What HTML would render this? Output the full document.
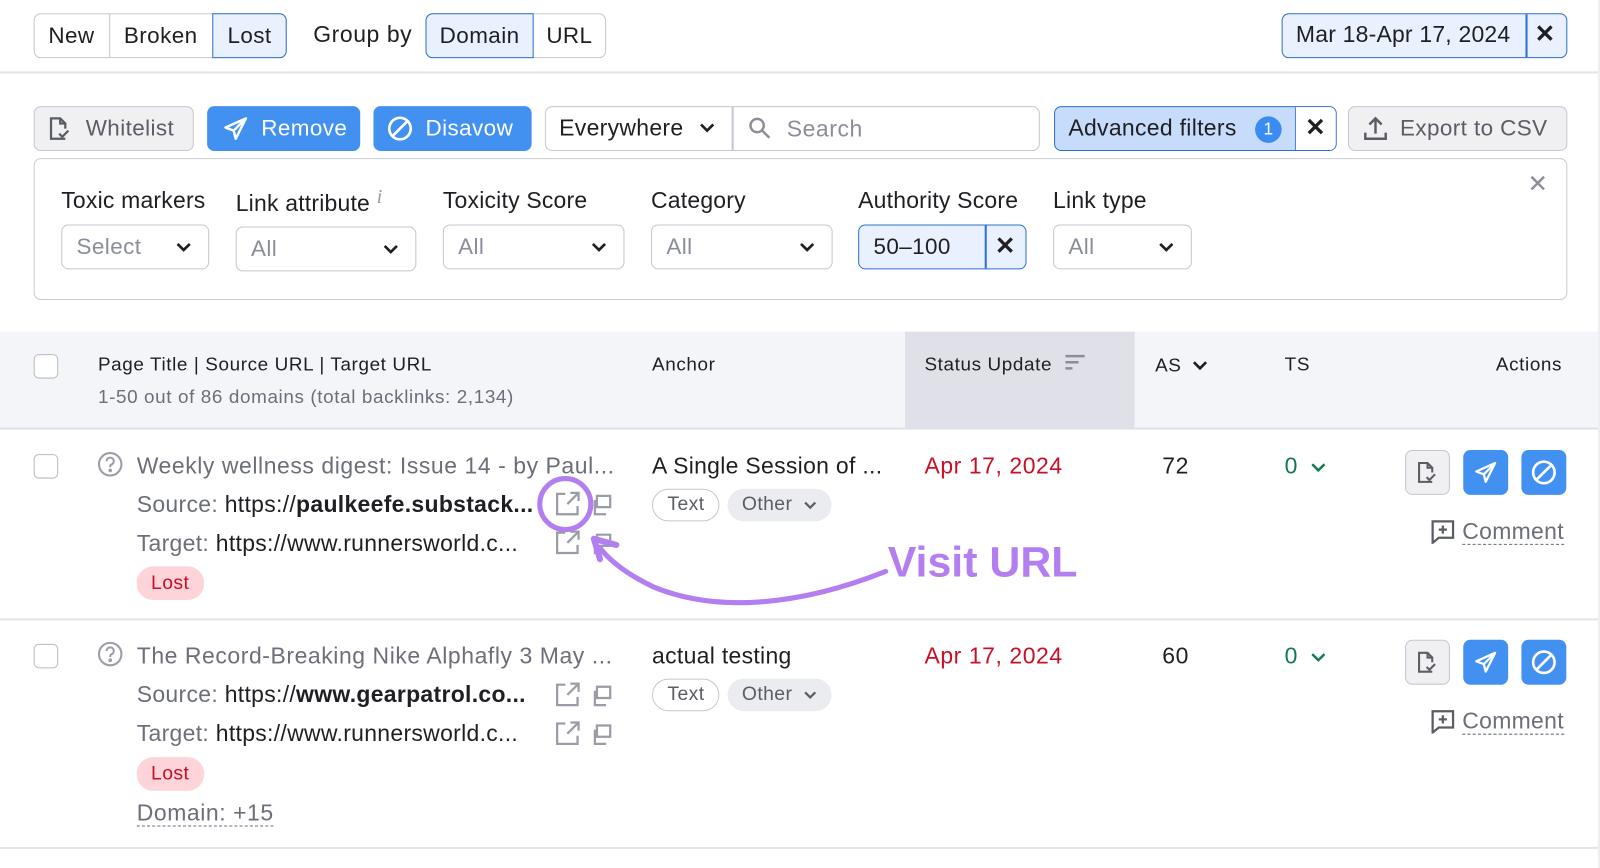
<!DOCTYPE html>
<html><head><meta charset="utf-8">
<style>
*{box-sizing:border-box;margin:0;padding:0}
body{width:1600px;height:851px;background:#fff;font-family:"Liberation Sans",Arial,sans-serif;color:#1f1f23;position:relative;overflow:hidden}
#w{position:absolute;left:0;top:0;width:1568px;height:834px;transform:scale(1.0204);transform-origin:0 0}
.a{position:absolute}
.b{position:absolute;border:1.5px solid #c4c7d0;border-radius:7px;display:flex;align-items:center;font-size:22px;white-space:nowrap;letter-spacing:.4px}
.seg{position:absolute;display:flex;align-items:center;justify-content:center;font-size:22px;height:44px;letter-spacing:.4px}
.t{position:absolute;font-size:22.5px;white-space:nowrap;letter-spacing:.55px}
.h{position:absolute;font-size:18.5px;white-space:nowrap;letter-spacing:.6px}
.gray{color:#6c6e79}
.dd{position:absolute;border:1.5px solid #c4c7d0;border-radius:7px;height:44px;font-size:22px;color:#8b8d98;display:flex;align-items:center;padding-left:14px;letter-spacing:.4px}
.dd svg{position:absolute;right:16px;top:15px}
.cb{position:absolute;width:24px;height:24px;border:1.5px solid #b7bac4;border-radius:5px;background:#fff}
.pill{position:absolute;height:32px;border-radius:16px;font-size:19px;display:flex;align-items:center;padding:0 14px;letter-spacing:.4px}
.ab{position:absolute;width:44px;height:44px;border-radius:7px;display:flex;align-items:center;justify-content:center}
.dash{border-bottom:1.5px dashed #6c6e79}
</style></head><body><div id="w">

<div class="b" style="left:33px;top:13px;width:248px;height:44px;overflow:hidden"></div>
<div class="seg" style="left:33px;top:13px;width:74px">New</div>
<div class="a" style="left:107px;top:14px;width:1px;height:42px;background:#c4c7d0"></div>
<div class="seg" style="left:107px;top:13px;width:101px">Broken</div>
<div class="seg" style="left:208px;top:13px;width:73px;background:#e9f1fe;border:1.5px solid #2d6fce;border-radius:0 7px 7px 0">Lost</div>
<div class="t" style="left:307px;top:21px">Group by</div>
<div class="b" style="left:417px;top:13px;width:177px;height:44px"></div>
<div class="seg" style="left:417px;top:13px;width:106px;background:#e9f1fe;border:1.5px solid #2d6fce;border-radius:7px 0 0 7px">Domain</div>
<div class="seg" style="left:523px;top:13px;width:70px">URL</div>
<div class="b" style="left:1256px;top:13px;width:280px;height:44px;background:#e9f1fe;border-color:#2d6fce"></div>
<div class="t" style="left:1270px;top:21px;letter-spacing:.2px">Mar 18-Apr 17, 2024</div>
<div class="a" style="left:1495px;top:14px;width:1.5px;height:42px;background:#2d6fce"></div>
<div class="t" style="left:1504px;top:19px;font-size:24px;font-weight:bold">✕</div>
<div class="a" style="left:0;top:70px;width:1568px;height:2px;background:#e4e5ea"></div>

<div class="b" style="left:33px;top:104px;width:157px;height:44px;background:#f0f0f3;color:#5a5c66;padding-left:12px">
<svg width="26" height="26" viewBox="0 0 26 26" fill="none" stroke="#5a5c66" stroke-width="2.2"><path d="M18 23H4V3h9l5 5v5"/><path d="M13 3v5h5"/><path d="M12 18l3 3 6-6"/></svg>
<span style="margin-left:12px">Whitelist</span></div>
<div class="b" style="left:203px;top:104px;width:150px;height:44px;background:#4290f0;border-color:#4290f0;color:#fff;padding-left:14px">
<svg width="26" height="26" viewBox="0 0 26 26" fill="none" stroke="#fff" stroke-width="2.4" stroke-linejoin="round"><path d="M23 3L3 12l8 3 2 8z"/><path d="M11 15l12-12"/></svg>
<span style="margin-left:12px">Remove</span></div>
<div class="b" style="left:366px;top:104px;width:155px;height:44px;background:#4290f0;border-color:#4290f0;color:#fff;padding-left:12px">
<svg width="26" height="26" viewBox="0 0 26 26" fill="none" stroke="#fff" stroke-width="2.6"><circle cx="13" cy="13" r="10.5"/><path d="M6 20L20 6"/></svg>
<span style="margin-left:12px">Disavow</span></div>
<div class="b" style="left:534px;top:104px;width:485px;height:44px"></div>
<div class="t" style="left:548px;top:113px;letter-spacing:.3px">Everywhere</div>
<svg class="a" style="left:685px;top:119px" width="16" height="12" viewBox="0 0 16 12" fill="none" stroke="#1f1f23" stroke-width="2.6"><path d="M2 3l6 6 6-6"/></svg>
<div class="a" style="left:717px;top:105px;width:1.5px;height:42px;background:#c4c7d0"></div>
<svg class="a" style="left:733px;top:114px" width="24" height="24" viewBox="0 0 24 24" fill="none" stroke="#8b8d98" stroke-width="2.4"><circle cx="9" cy="9" r="6.5"/><path d="M14 14l7 7"/></svg>
<div class="t" style="left:771px;top:114px;color:#8b8d98">Search</div>
<div class="b" style="left:1033px;top:104px;width:277px;height:44px;background:#c6dcfa;border-color:#2d6fce"></div>
<div class="a" style="left:1269px;top:105px;width:40px;height:42px;background:#fff;border-left:1.5px solid #2d6fce;border-radius:0 6px 6px 0"></div>
<div class="t" style="left:1047px;top:113px;letter-spacing:.3px">Advanced filters</div>
<div class="a" style="left:1230px;top:114px;width:26px;height:26px;border-radius:13px;background:#3a8cf0;color:#fff;font-size:17px;display:flex;align-items:center;justify-content:center">1</div>
<div class="t" style="left:1279px;top:111px;font-size:24px;font-weight:bold">✕</div>
<div class="b" style="left:1321px;top:104px;width:215px;height:44px;background:#f0f0f3;color:#5a5c66;padding-left:12px">
<svg width="28" height="28" viewBox="0 0 28 28" fill="none" stroke="#5a5c66" stroke-width="2.4"><path d="M14 19V4M8 10l6-6 6 6"/><path d="M4 18v6h20v-6"/></svg>
<span style="margin-left:10px">Export to CSV</span></div>

<div class="a" style="left:33px;top:155px;width:1503px;height:139px;border:1.5px solid #c9cbd3;border-radius:7px"></div>
<div class="t" style="left:1497px;top:166px;font-size:24px;color:#8b8d98">✕</div>
<div class="t" style="left:60px;top:184px;letter-spacing:.2px">Toxic markers</div>
<div class="t" style="left:231px;top:187px;letter-spacing:.2px">Link attribute <i style="color:#9a9ca6;font-family:'Liberation Serif';font-size:20px;position:relative;top:-8px">i</i></div>
<div class="t" style="left:434px;top:184px;letter-spacing:.2px">Toxicity Score</div>
<div class="t" style="left:638px;top:184px;letter-spacing:.2px">Category</div>
<div class="t" style="left:841px;top:184px;letter-spacing:.2px">Authority Score</div>
<div class="t" style="left:1032px;top:184px;letter-spacing:.2px">Link type</div>
<div class="dd" style="left:60px;top:220px;width:145px">Select<svg width="16" height="12" viewBox="0 0 16 12" fill="none" stroke="#1f1f23" stroke-width="2.6"><path d="M2 3l6 6 6-6"/></svg></div>
<div class="dd" style="left:231px;top:222px;width:177px">All<svg width="16" height="12" viewBox="0 0 16 12" fill="none" stroke="#1f1f23" stroke-width="2.6"><path d="M2 3l6 6 6-6"/></svg></div>
<div class="dd" style="left:434px;top:220px;width:178px">All<svg width="16" height="12" viewBox="0 0 16 12" fill="none" stroke="#1f1f23" stroke-width="2.6"><path d="M2 3l6 6 6-6"/></svg></div>
<div class="dd" style="left:638px;top:220px;width:178px">All<svg width="16" height="12" viewBox="0 0 16 12" fill="none" stroke="#1f1f23" stroke-width="2.6"><path d="M2 3l6 6 6-6"/></svg></div>
<div class="dd" style="left:841px;top:220px;width:165px;background:#e9f1fe;border-color:#2d6fce;color:#1f1f23">50–100</div>
<div class="a" style="left:965px;top:221px;width:1.5px;height:42px;background:#2d6fce"></div>
<div class="t" style="left:975px;top:227px;font-size:24px;font-weight:bold">✕</div>
<div class="dd" style="left:1032px;top:220px;width:136px">All<svg width="16" height="12" viewBox="0 0 16 12" fill="none" stroke="#1f1f23" stroke-width="2.6"><path d="M2 3l6 6 6-6"/></svg></div>

<div class="a" style="left:0;top:325px;width:1568px;height:96px;background:#f4f5f9;border-bottom:2px solid #e0e1e6"></div>
<div class="a" style="left:887px;top:325px;width:225px;height:94px;background:#e0e1e8"></div>
<div class="a" style="left:1566px;top:0;width:2px;height:851px;background:#eceef2"></div>
<div class="cb" style="left:33px;top:347px"></div>
<div class="h" style="left:96px;top:346px">Page Title | Source URL | Target URL</div>
<div class="h gray" style="left:96px;top:378px">1-50 out of 86 domains (total backlinks: 2,134)</div>
<div class="h" style="left:639px;top:346px">Anchor</div>
<div class="h" style="left:906px;top:346px">Status Update</div>
<svg class="a" style="left:1044px;top:347px" width="20" height="18" viewBox="0 0 20 18" fill="none" stroke="#8b8d98" stroke-width="2.4"><path d="M0 2h19M0 8h13M0 14h7"/></svg>
<div class="h" style="left:1132px;top:347px">AS</div>
<svg class="a" style="left:1168px;top:352px" width="16" height="12" viewBox="0 0 16 12" fill="none" stroke="#1f1f23" stroke-width="2.6"><path d="M2 3l6 6 6-6"/></svg>
<div class="h" style="left:1259px;top:346px">TS</div>
<div class="h" style="left:1466px;top:346px">Actions</div>

<div class="cb" style="left:33px;top:445px"></div>
<svg class="a" style="left:95px;top:442px" width="26" height="26" viewBox="0 0 26 26" fill="none" stroke="#9a9ca6" stroke-width="2"><circle cx="13" cy="13" r="11"/><path d="M9.5 10a3.5 3.5 0 1 1 4.5 3.3c-.7.3-1 .9-1 1.6v1"/><circle cx="13" cy="19" r=".8" fill="#9a9ca6"/></svg>
<div class="t gray" style="left:134px;top:444px">Weekly wellness digest: Issue 14 - by Paul...</div>
<div class="t" style="left:134px;top:482px;letter-spacing:.3px"><span class="gray">Source:</span> https://<b>paulkeefe.substack...</b></div>
<div class="t" style="left:134px;top:520px;letter-spacing:.3px"><span class="gray">Target:</span> https://www.runnersworld.c...</div>
<div class="pill" style="left:134px;top:555px;background:#fdd4d9;color:#c80f25;height:33px">Lost</div>

<div class="t" style="left:639px;top:444px;letter-spacing:.3px">A Single Session of ...</div>
<div class="pill" style="left:639px;top:479px;border:1.5px solid #c4c7d0;color:#5a5c66">Text</div>
<div class="pill" style="left:713px;top:479px;background:#ebecf0;color:#5a5c66">Other <svg style="margin-left:10px" width="14" height="10" viewBox="0 0 16 12" fill="none" stroke="#5a5c66" stroke-width="2.6"><path d="M2 3l6 6 6-6"/></svg></div>
<div class="t" style="left:906px;top:444px;color:#c80f25">Apr 17, 2024</div>
<div class="t" style="left:1139px;top:444px">72</div>
<div class="t" style="left:1259px;top:444px;color:#137a4e">0</div>
<svg class="a" style="left:1284px;top:452px" width="16" height="12" viewBox="0 0 16 12" fill="none" stroke="#137a4e" stroke-width="2.4"><path d="M2 3l6 6 6-6"/></svg>

<div class="a" style="left:0;top:606px;width:1566px;height:2px;background:#e4e5ea"></div>
<div class="cb" style="left:33px;top:631px"></div>
<svg class="a" style="left:95px;top:628px" width="26" height="26" viewBox="0 0 26 26" fill="none" stroke="#9a9ca6" stroke-width="2"><circle cx="13" cy="13" r="11"/><path d="M9.5 10a3.5 3.5 0 1 1 4.5 3.3c-.7.3-1 .9-1 1.6v1"/><circle cx="13" cy="19" r=".8" fill="#9a9ca6"/></svg>
<div class="t gray" style="left:134px;top:630px">The Record-Breaking Nike Alphafly 3 May ...</div>
<div class="t" style="left:134px;top:668px;letter-spacing:.3px"><span class="gray">Source:</span> https://<b>www.gearpatrol.co...</b></div>
<div class="t" style="left:134px;top:706px;letter-spacing:.3px"><span class="gray">Target:</span> https://www.runnersworld.c...</div>
<div class="pill" style="left:134px;top:742px;background:#fdd4d9;color:#c80f25;height:33px">Lost</div>
<div class="t gray" style="left:134px;top:784px"><span class="dash">Domain: +15</span></div>

<div class="t" style="left:639px;top:630px;letter-spacing:.3px">actual testing</div>
<div class="pill" style="left:639px;top:665px;border:1.5px solid #c4c7d0;color:#5a5c66">Text</div>
<div class="pill" style="left:713px;top:665px;background:#ebecf0;color:#5a5c66">Other <svg style="margin-left:10px" width="14" height="10" viewBox="0 0 16 12" fill="none" stroke="#5a5c66" stroke-width="2.6"><path d="M2 3l6 6 6-6"/></svg></div>
<div class="t" style="left:906px;top:630px;color:#c80f25">Apr 17, 2024</div>
<div class="t" style="left:1139px;top:630px">60</div>
<div class="t" style="left:1259px;top:630px;color:#137a4e">0</div>
<svg class="a" style="left:1284px;top:638px" width="16" height="12" viewBox="0 0 16 12" fill="none" stroke="#137a4e" stroke-width="2.4"><path d="M2 3l6 6 6-6"/></svg>
<div class="a" style="left:0;top:830px;width:1566px;height:2px;background:#e4e5ea"></div>

<svg class="a" style="left:0;top:0" width="1568" height="834" fill="none" stroke="#9a9ca6" stroke-width="2.2">
<g><path d="M554 484h-8v20h20v-8"/><path d="M556 494l11-11M559 483h8v8"/><path d="M585 497v-11h13v11zM583 490v14h11"/></g>
<g transform="translate(0,38)"><path d="M554 484h-8v20h20v-8"/><path d="M556 494l11-11M559 483h8v8"/><path d="M585 497v-11h13v11zM583 490v14h11"/></g>
<g transform="translate(0,187)"><path d="M554 484h-8v20h20v-8"/><path d="M556 494l11-11M559 483h8v8"/><path d="M585 497v-11h13v11zM583 490v14h11"/></g>
<g transform="translate(0,225)"><path d="M554 484h-8v20h20v-8"/><path d="M556 494l11-11M559 483h8v8"/><path d="M585 497v-11h13v11zM583 490v14h11"/></g>
</svg>

<div class="ab" style="left:1377px;top:441px;background:#f0f0f3;border:1.5px solid #c4c7d0"><svg width="24" height="26" viewBox="0 0 26 26" fill="none" stroke="#5a5c66" stroke-width="2.2"><path d="M18 23H4V3h9l5 5v5"/><path d="M13 3v5h5"/><path d="M12 18l3 3 6-6"/></svg></div>
<div class="ab" style="left:1434px;top:441px;background:#4290f0"><svg width="24" height="24" viewBox="0 0 26 26" fill="none" stroke="#fff" stroke-width="2.4" stroke-linejoin="round"><path d="M23 3L3 12l8 3 2 8z"/><path d="M11 15l12-12"/></svg></div>
<div class="ab" style="left:1491px;top:441px;background:#4290f0"><svg width="26" height="26" viewBox="0 0 26 26" fill="none" stroke="#fff" stroke-width="2.6"><circle cx="13" cy="13" r="10.5"/><path d="M6 20L20 6"/></svg></div>
<svg class="a" style="left:1402px;top:509px" width="24" height="24" viewBox="0 0 24 24" fill="none" stroke="#5a5c66" stroke-width="2.2"><path d="M2 2h20v16H8l-6 5z"/><path d="M12 6v8M8 10h8"/></svg>
<div class="t gray" style="left:1433px;top:508px;letter-spacing:.3px"><span class="dash">Comment</span></div>

<div class="ab" style="left:1377px;top:627px;background:#f0f0f3;border:1.5px solid #c4c7d0"><svg width="24" height="26" viewBox="0 0 26 26" fill="none" stroke="#5a5c66" stroke-width="2.2"><path d="M18 23H4V3h9l5 5v5"/><path d="M13 3v5h5"/><path d="M12 18l3 3 6-6"/></svg></div>
<div class="ab" style="left:1434px;top:627px;background:#4290f0"><svg width="24" height="24" viewBox="0 0 26 26" fill="none" stroke="#fff" stroke-width="2.4" stroke-linejoin="round"><path d="M23 3L3 12l8 3 2 8z"/><path d="M11 15l12-12"/></svg></div>
<div class="ab" style="left:1491px;top:627px;background:#4290f0"><svg width="26" height="26" viewBox="0 0 26 26" fill="none" stroke="#fff" stroke-width="2.6"><circle cx="13" cy="13" r="10.5"/><path d="M6 20L20 6"/></svg></div>
<svg class="a" style="left:1402px;top:695px" width="24" height="24" viewBox="0 0 24 24" fill="none" stroke="#5a5c66" stroke-width="2.2"><path d="M2 2h20v16H8l-6 5z"/><path d="M12 6v8M8 10h8"/></svg>
<div class="t gray" style="left:1433px;top:694px;letter-spacing:.3px"><span class="dash">Comment</span></div>

<svg class="a" style="left:0;top:0" width="1568" height="834" fill="none" stroke="#b37ff0" stroke-width="5" stroke-linecap="round">
<circle cx="554" cy="494" r="25"/>
<path d="M868 560C780 595 700 600 640 575C615 563 598 550 588 537"/>
<path d="M582 528l22 6M582 528l6 20" stroke-width="6"/>
</svg>
<div class="t" style="left:870px;top:527px;font-size:42px;font-weight:bold;color:#b37ff0;letter-spacing:0">Visit URL</div>
</div></body></html>
